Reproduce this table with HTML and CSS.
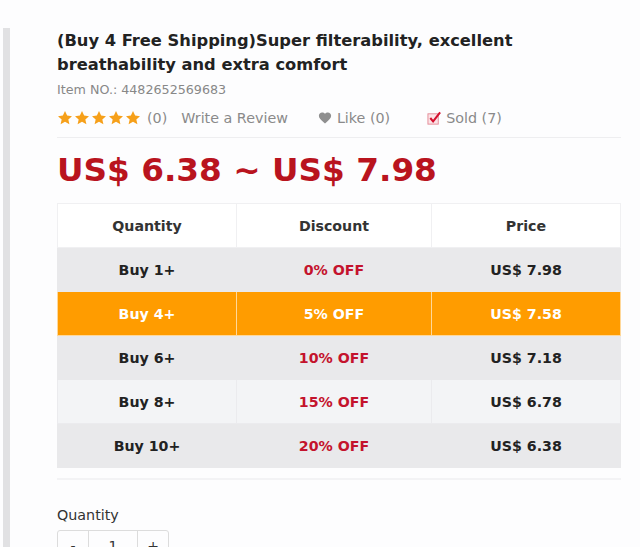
FILE: index.html
```html
<!DOCTYPE html>
<html lang="en">
<head>
    <meta charset="UTF-8">
    <title>Product detail</title>
    <link rel="stylesheet" href="styles.css">
</head>
<body>
    <div class="page">
        <div class="side-bar"></div>
        <div class="product">
            <h1 class="title">(Buy 4 Free Shipping)Super filterability, excellent breathability and extra comfort</h1>
            <div class="item-no">Item NO.: 4482652569683</div>

            <div class="meta">
                <span class="stars">
                    <svg viewBox="0 0 24 24"><path d="M12 1.5l3.2 6.9 7.3.8-5.5 5 1.6 7.3L12 17.8l-6.6 3.7 1.6-7.3-5.5-5 7.3-.8z"/></svg>
                    <svg viewBox="0 0 24 24"><path d="M12 1.5l3.2 6.9 7.3.8-5.5 5 1.6 7.3L12 17.8l-6.6 3.7 1.6-7.3-5.5-5 7.3-.8z"/></svg>
                    <svg viewBox="0 0 24 24"><path d="M12 1.5l3.2 6.9 7.3.8-5.5 5 1.6 7.3L12 17.8l-6.6 3.7 1.6-7.3-5.5-5 7.3-.8z"/></svg>
                    <svg viewBox="0 0 24 24"><path d="M12 1.5l3.2 6.9 7.3.8-5.5 5 1.6 7.3L12 17.8l-6.6 3.7 1.6-7.3-5.5-5 7.3-.8z"/></svg>
                    <svg viewBox="0 0 24 24"><path d="M12 1.5l3.2 6.9 7.3.8-5.5 5 1.6 7.3L12 17.8l-6.6 3.7 1.6-7.3-5.5-5 7.3-.8z"/></svg>
                </span>
                <span class="count">(0)</span>
                <span class="review">Write a Review</span>
                <span class="like">
                    <svg class="heart" viewBox="0 0 24 24"><path d="M12 21.5l-1.5-1.4C5 15.2 1.5 12 1.5 8 1.5 4.8 4 2.5 7 2.5c1.9 0 3.8.9 5 2.4 1.2-1.5 3.1-2.4 5-2.4 3 0 5.5 2.3 5.5 5.5 0 4-3.5 7.2-9 12.1z"/></svg>
                    Like (0)
                </span>
                <span class="sold">
                    <svg class="check" viewBox="0 0 16 16"><rect x="1" y="3" width="11" height="11" fill="#fbe3e6" stroke="#e48a97" stroke-width="1"/><path d="M3.5 7.5l3 3.5L14 1.5" fill="none" stroke="#d4102e" stroke-width="2.2"/></svg>
                    Sold (7)
                </span>
            </div>

            <div class="price-range">US$ 6.38 ~ US$ 7.98</div>

            <table class="discounts">
                <thead>
                    <tr><th>Quantity</th><th>Discount</th><th>Price</th></tr>
                </thead>
                <tbody>
                    <tr><td>Buy 1+</td><td class="off">0% OFF</td><td>US$ 7.98</td></tr>
                    <tr class="active"><td>Buy 4+</td><td class="off">5% OFF</td><td>US$ 7.58</td></tr>
                    <tr><td>Buy 6+</td><td class="off">10% OFF</td><td>US$ 7.18</td></tr>
                    <tr class="light"><td>Buy 8+</td><td class="off">15% OFF</td><td>US$ 6.78</td></tr>
                    <tr><td>Buy 10+</td><td class="off">20% OFF</td><td>US$ 6.38</td></tr>
                </tbody>
            </table>

            <div class="qty-label">Quantity</div>
            <div class="qty-box">
                <span class="qty-btn">-</span>
                <span class="qty-val">1</span>
                <span class="qty-btn">+</span>
            </div>
        </div>
    </div>
</body>
</html>
```

FILE: styles.css
```css
body {
    margin: 0;
    background: #fdfdfe;
    font-family: "DejaVu Sans", Verdana, sans-serif;
    color: #222;
    overflow: hidden;
}

.page {
    display: flex;
    height: 547px;
    padding-top: 28px;
    box-sizing: border-box;
}

.side-bar {
    width: 7px;
    margin-left: 3px;
    background: #e1e1e3;
}

.product {
    margin-left: 47px;
    width: 564px;
}

.title {
    font-size: 16.3px;
    font-weight: bold;
    line-height: 24px;
    margin: 0;
    margin-top: 1px;
    color: #222;
}

.item-no {
    font-size: 12.7px;
    color: #888;
    margin-top: 4px;
    line-height: 17px;
}

.meta {
    display: flex;
    align-items: center;
    font-size: 14.3px;
    color: #8a8a8a;
    height: 26px;
    margin-top: 7px;
    padding-bottom: 6px;
    border-bottom: 1px solid #eeeef0;
}

.stars {
    display: flex;
    gap: 1px;
}

.stars svg {
    width: 16px;
    height: 16px;
    fill: #f6a01a;
}

.count {
    margin-left: 6px;
}

.review {
    margin-left: 14px;
}

.like {
    margin-left: 30px;
    display: flex;
    align-items: center;
}

.heart {
    width: 14px;
    height: 14px;
    fill: #8f8f8f;
    margin-right: 5px;
}

.sold {
    margin-left: 37px;
    display: flex;
    align-items: center;
}

.check {
    width: 15px;
    height: 15px;
    margin-right: 4px;
}

.price-range {
    font-size: 32.7px;
    font-weight: bold;
    color: #b9141e;
    margin-top: 12px;
    line-height: 40px;
}

.discounts {
    width: 564px;
    margin-top: 13px;
    border-collapse: collapse;
    font-size: 14.2px;
    font-weight: bold;
    text-align: center;
    color: #222;
}

.discounts th,
.discounts td {
    height: 43px;
    padding: 0;
    border: 1px solid #f0f0f2;
}

.discounts th {
    background: #fff;
    font-weight: bold;
    color: #333;
}

.discounts th:nth-child(1) { width: 178px; }
.discounts th:nth-child(2) { width: 194px; }

.discounts td {
    background: #e9e9eb;
    border-color: #e9e9eb;
}

.discounts .off {
    color: #c4132d;
}

.discounts tr.light td {
    background: #f3f4f6;
    border-color: #ebebee;
}

.discounts tr.active td {
    background: #ff9c00;
    color: #fff;
    border-color: #ffd89a;
}

.qty-label {
    margin-top: 10px;
    border-top: 2px solid #f3f3f5;
    padding-top: 27px;
    font-size: 14.3px;
    color: #333;
}

.qty-box {
    display: flex;
    margin-top: 7px;
    width: 110px;
    height: 32px;
    border: 1px solid #dcdcdc;
    border-radius: 3px;
    font-size: 14px;
    color: #333;
}

.qty-btn {
    width: 30px;
    text-align: center;
    line-height: 30px;
}

.qty-val {
    flex: 1;
    text-align: center;
    line-height: 30px;
    border-left: 1px solid #dcdcdc;
    border-right: 1px solid #dcdcdc;
}
```
